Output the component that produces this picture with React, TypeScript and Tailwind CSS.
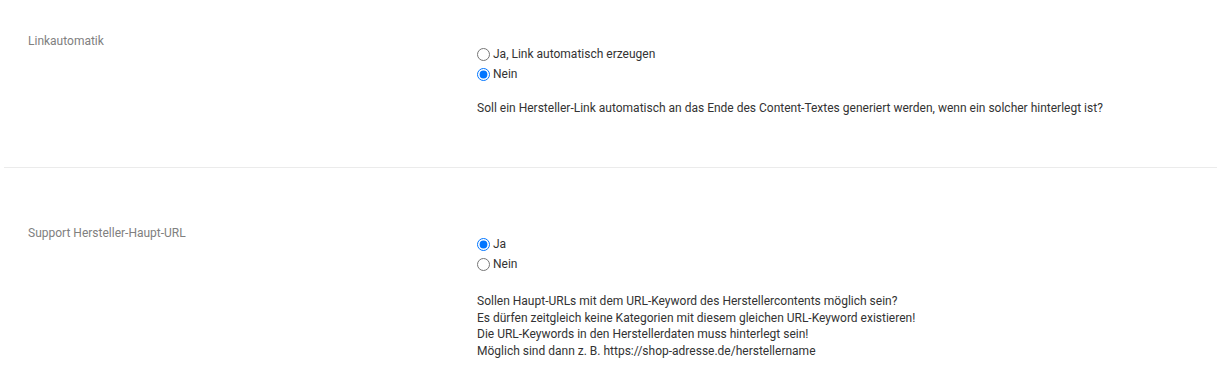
import React from "react";

function Radio({ name, label, checked }: { name: string; label: string; checked?: boolean }) {
  return (
    <label className="flex items-center h-[20px] text-[12px] text-[#333]">
      <input type="radio" name={name} defaultChecked={checked} className="m-0 mr-[3px] w-[13px] h-[13px]" />
      <span>{label}</span>
    </label>
  );
}

export default function App() {
  return (
    <div className="bg-white w-[1217px] h-[377px] overflow-hidden" style={{ fontFamily: "Roboto, 'Liberation Sans', sans-serif" }}>
      <div className="flex pt-[33px] pb-[51px] pl-[28px]">
        <div className="w-[449px] text-[12px] leading-[16px] text-[#808080]">Linkautomatik</div>
        <div className="pt-[11px]">
          <Radio name="a" label="Ja, Link automatisch erzeugen" />
          <Radio name="a" label="Nein" checked />
          <p className="mt-[16px] text-[12px] leading-[16px] text-[#333]">
            Soll ein Hersteller-Link automatisch an das Ende des Content-Textes generiert werden, wenn ein solcher hinterlegt ist?
          </p>
        </div>
      </div>
      <div className="ml-[4px] border-t border-[#ebebeb]" />
      <div className="flex pt-[57px] pl-[28px]">
        <div className="w-[449px] text-[12px] leading-[16px] text-[#808080]">Support Hersteller-Haupt-URL</div>
        <div className="pt-[9px]">
          <Radio name="b" label="Ja" checked />
          <Radio name="b" label="Nein" />
          <p className="mt-[19px] text-[12px] leading-[16.5px] text-[#333]">
            Sollen Haupt-URLs mit dem URL-Keyword des Herstellercontents möglich sein?<br />
            Es dürfen zeitgleich keine Kategorien mit diesem gleichen URL-Keyword existieren!<br />
            Die URL-Keywords in den Herstellerdaten muss hinterlegt sein!<br />
            Möglich sind dann z. B. https://shop-adresse.de/herstellername
          </p>
        </div>
      </div>
    </div>
  );
}
